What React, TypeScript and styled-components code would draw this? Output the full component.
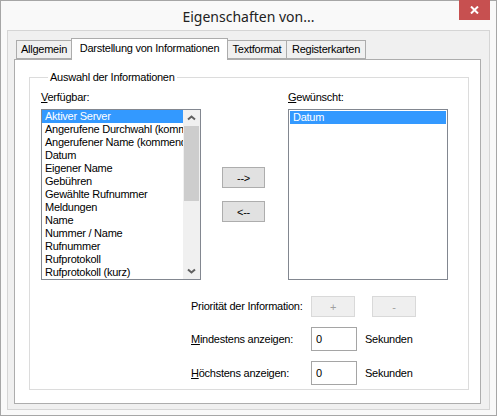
import styled, { createGlobalStyle } from 'styled-components';

const available = [
  'Aktiver Server',
  'Angerufene Durchwahl (kommend)',
  'Angerufener Name (kommend)',
  'Datum',
  'Eigener Name',
  'Gebühren',
  'Gewählte Rufnummer',
  'Meldungen',
  'Name',
  'Nummer / Name',
  'Rufnummer',
  'Rufprotokoll',
  'Rufprotokoll (kurz)'
];

const wanted = ['Datum'];

const tabs = [
  { label: 'Allgemein', width: 56 },
  { label: 'Darstellung von Informationen', width: 157, active: true },
  { label: 'Textformat', width: 60 },
  { label: 'Registerkarten', width: 80 }
];

const GlobalStyle = createGlobalStyle`
  html, body {
    margin: 0;
    padding: 0;
    background: #ffffff;
  }
  body {
    font-family: 'Liberation Sans', Arial, sans-serif;
    font-size: 11px;
    letter-spacing: -0.25px;
    color: #000000;
  }
`;

const Chevron = ({ down }: { down?: boolean }) => (
  <svg width="9" height="6" viewBox="0 0 9 6">
    <path
      d={down ? 'M1 1.5 L4.5 4.5 L8 1.5' : 'M1 4.5 L4.5 1.5 L8 4.5'}
      fill="none"
      stroke="#606060"
      strokeWidth="2"
    />
  </svg>
);

const ListBox = ({ items, selected, scroll }: { items: string[]; selected: number; scroll?: boolean }) => (
  <ListFrame>
    <ListItems $inset={!scroll}>
      {items.map((item, i) => (
        <ListItem key={item} $selected={i === selected}>
          {item}
        </ListItem>
      ))}
    </ListItems>
    {scroll && (
      <ScrollBar>
        <ScrollArrow>
          <Chevron />
        </ScrollArrow>
        <ScrollTrack>
          <ScrollThumb />
        </ScrollTrack>
        <ScrollArrow>
          <Chevron down />
        </ScrollArrow>
      </ScrollBar>
    )}
  </ListFrame>
);

export default function App() {
  return (
    <>
      <GlobalStyle />
      <Window>
        <TitleBar>
          <span />
          <Title>Eigenschaften von...</Title>
          <CloseButton>
            <svg width="9" height="8" viewBox="0 0 9 8">
              <path d="M1 0.5 L8 7.5 M8 0.5 L1 7.5" stroke="#ffffff" strokeWidth="2" />
            </svg>
          </CloseButton>
        </TitleBar>
        <Client>
          <TabStrip>
            {tabs.map((t) => (
              <Tab key={t.label} $active={t.active} $width={t.width}>
                {t.label}
              </Tab>
            ))}
          </TabStrip>
          <TabPanel>
            <Group>
              <Legend>Auswahl der Informationen</Legend>
              <ListsRow>
                <ListColumn>
                  <FieldLabel>
                    <Key>V</Key>erfügbar:
                  </FieldLabel>
                  <ListBox items={available} selected={0} scroll />
                </ListColumn>
                <MoveButtons>
                  <DialogButton $width={43}>{'-->'}</DialogButton>
                  <DialogButton $width={43}>{'<--'}</DialogButton>
                </MoveButtons>
                <ListColumn $right>
                  <FieldLabel>
                    <Key>G</Key>ewünscht:
                  </FieldLabel>
                  <ListBox items={wanted} selected={0} />
                </ListColumn>
              </ListsRow>
              <SettingsGrid>
                <RowLabel>Priorität der Information:</RowLabel>
                <DialogButton $width={44} $disabled disabled>
                  +
                </DialogButton>
                <DialogButton $width={44} $disabled $offset={15} disabled>
                  -
                </DialogButton>

                <RowLabel>
                  <Key>M</Key>indestens anzeigen:
                </RowLabel>
                <NumberBox readOnly value="0" />
                <Unit>Sekunden</Unit>

                <RowLabel>
                  <Key>H</Key>öchstens anzeigen:
                </RowLabel>
                <NumberBox readOnly value="0" />
                <Unit>Sekunden</Unit>
              </SettingsGrid>
            </Group>
          </TabPanel>
        </Client>
      </Window>
    </>
  );
}

const Window = styled.div`
  box-sizing: border-box;
  width: 497px;
  height: 416px;
  border: 1px solid #a6a6a6;
  background: #f9f9f9;
  padding: 0 6px 5px 6px;
  display: flex;
  flex-direction: column;
`;

const TitleBar = styled.div`
  height: 29px;
  display: grid;
  grid-template-columns: 1fr auto 1fr;
  align-items: center;
`;

const Title = styled.div`
  font-family: 'Noto Sans', 'Open Sans', sans-serif;
  font-size: 14px;
  letter-spacing: 0;
  color: #222222;
  margin-top: 1px;
`;

const CloseButton = styled.div`
  justify-self: end;
  align-self: start;
  width: 31px;
  height: 20px;
  margin-top: -1px;
  background: #c75050;
  display: flex;
  align-items: center;
  justify-content: center;
`;

const Client = styled.div`
  flex: 1;
  display: flex;
  flex-direction: column;
  border: 1px solid #d5d5d5;
  background: #f0f0f0;
  padding: 7px 8px 5px 6px;
`;

const TabStrip = styled.div`
  height: 21px;
  display: flex;
  align-items: flex-end;
  padding-left: 2px;
  position: relative;
  z-index: 1;
`;

const Tab = styled.div<{ $active?: boolean; $width: number }>`
  box-sizing: border-box;
  width: ${(p) => p.$width}px;
  height: ${(p) => (p.$active ? 22 : 19)}px;
  margin-bottom: ${(p) => (p.$active ? -1 : 0)}px;
  margin-right: -1px;
  border: 1px solid #acacac;
  border-bottom: ${(p) => (p.$active ? 'none' : '1px solid #acacac')};
  background: ${(p) => (p.$active ? '#ffffff' : '#f0f0f0')};
  text-align: center;
  line-height: ${(p) => (p.$active ? 19 : 17)}px;
  white-space: nowrap;
`;

const TabPanel = styled.div`
  flex: 1;
  background: #ffffff;
  border: 1px solid #adadad;
`;

const Group = styled.fieldset`
  margin: 11px 11px 0 14px;
  padding: 7px 20px 4px 11px;
  border: 1px solid #dcdcdc;
  min-inline-size: 0;
`;

const Legend = styled.legend`
  margin-left: 7px;
  padding: 0 2px;
  line-height: 13px;
`;

const ListsRow = styled.div`
  display: flex;
  align-items: flex-start;
`;

const ListColumn = styled.div<{ $right?: boolean }>`
  display: flex;
  flex-direction: column;
  gap: 5px;
  margin-left: ${(p) => (p.$right ? 23 : 0)}px;
`;

const FieldLabel = styled.div`
  line-height: 13px;
`;

const Key = styled.span`
  text-decoration: underline;
`;

const ListFrame = styled.div`
  box-sizing: border-box;
  width: 160px;
  height: 171px;
  border: 1px solid #828790;
  background: #ffffff;
  display: flex;
  overflow: hidden;
`;

const ListItems = styled.div<{ $inset?: boolean }>`
  flex: 1;
  min-width: 0;
  padding: ${(p) => (p.$inset ? '1px 1px 0 1px' : '0')};
`;

const ListItem = styled.div<{ $selected?: boolean }>`
  height: 13px;
  line-height: 13px;
  padding-left: 3px;
  white-space: nowrap;
  overflow: hidden;
  background: ${(p) => (p.$selected ? '#3399ff' : 'transparent')};
  color: ${(p) => (p.$selected ? '#ffffff' : '#000000')};
`;

const ScrollBar = styled.div`
  width: 17px;
  background: #f0f0f0;
  display: flex;
  flex-direction: column;
`;

const ScrollArrow = styled.div`
  height: 16px;
  display: flex;
  align-items: center;
  justify-content: center;
`;

const ScrollTrack = styled.div`
  flex: 1;
  padding: 0 1px;
`;

const ScrollThumb = styled.div`
  height: 75px;
  background: #cdcdcd;
`;

const MoveButtons = styled.div`
  display: flex;
  flex-direction: column;
  gap: 13px;
  margin-left: 21px;
  padding-top: 76px;
`;

const DialogButton = styled.button<{ $width: number; $disabled?: boolean; $offset?: number }>`
  box-sizing: border-box;
  width: ${(p) => p.$width}px;
  height: 21px;
  margin: 0 0 0 ${(p) => p.$offset ?? 0}px;
  padding: 0;
  border: 1px solid ${(p) => (p.$disabled ? '#d9d9d9' : '#adadad')};
  background: ${(p) => (p.$disabled ? '#efefef' : '#e1e1e1')};
  color: ${(p) => (p.$disabled ? '#a0a0a0' : '#000000')};
  font-family: 'Liberation Sans', Arial, sans-serif;
  font-size: 11px;
  letter-spacing: -0.25px;
  justify-self: start;
`;

const SettingsGrid = styled.div`
  display: grid;
  grid-template-columns: 120px 46px auto;
  grid-template-rows: 21px 24px 24px;
  row-gap: 10px;
  align-items: center;
  margin: 16px 0 0 150px;
`;

const RowLabel = styled.div`
  line-height: 13px;
`;

const NumberBox = styled.input`
  box-sizing: border-box;
  width: 46px;
  height: 24px;
  margin: 0;
  padding: 0 4px;
  border: 1px solid #a5a5a5;
  font-family: 'Liberation Sans', Arial, sans-serif;
  font-size: 11px;
  color: #000000;
  outline: none;
`;

const Unit = styled.div`
  margin-left: 8px;
`;
